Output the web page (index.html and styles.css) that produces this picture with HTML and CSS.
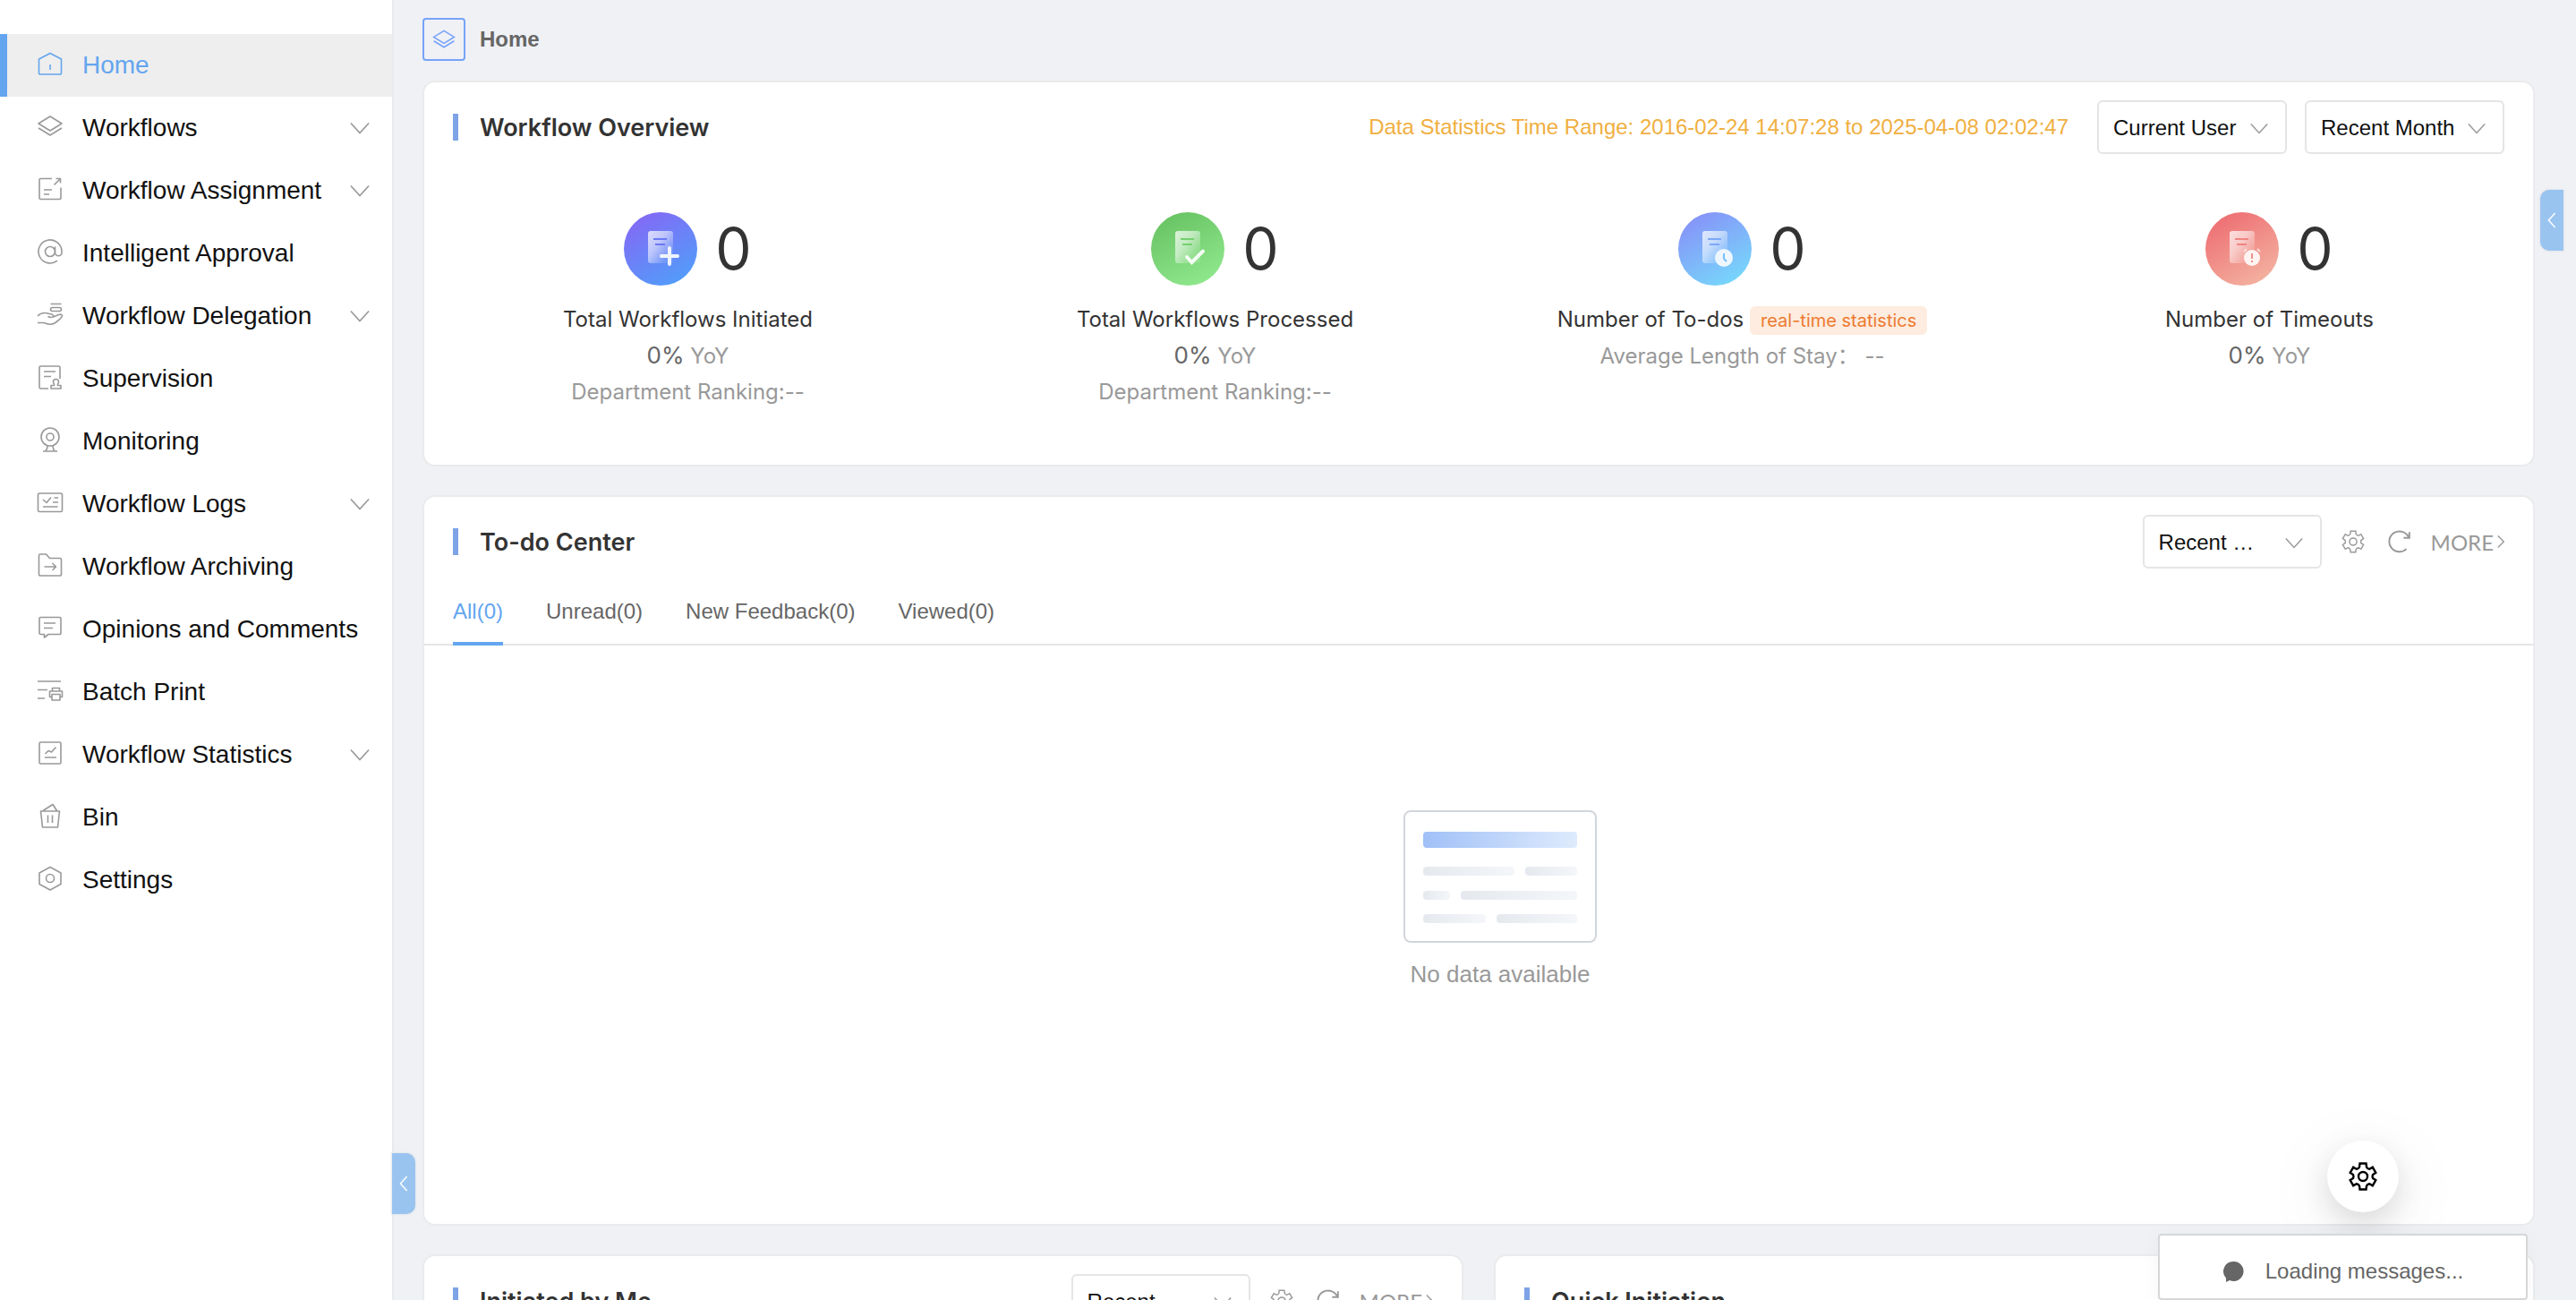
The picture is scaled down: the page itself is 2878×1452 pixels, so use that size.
FILE: index.html
```html
<!DOCTYPE html>
<html lang="en">
<head>
    <meta charset="UTF-8">
    <meta name="viewport" content="width=device-width, initial-scale=1.0">
    <title>Home</title>
    <link rel="stylesheet" href="styles.css">
</head>
<body>
    <!-- shared icons -->
    <svg class="sprite" aria-hidden="true">
        <symbol id="down" viewBox="0 0 24 14"><path d="M1 1l11 12L23 1"/></symbol>
        <symbol id="left" viewBox="0 0 12 20"><path d="M10 1L2 10l8 9"/></symbol>
        <symbol id="right" viewBox="0 0 10 18"><path d="M1 1l8 8-8 8"/></symbol>
        <symbol id="layers" viewBox="0 0 32 32"><path d="M16 5l13 8-13 8-13-8zM3 18l13 8 13-8"/></symbol>
        <symbol id="gear" viewBox="-16 -16 32 32">
            <path d="M-3.5-14.5h7L4-10.5Q5-8.5 7.2-8.2L10.8-10.3 14.3-4.2 11-2Q10 0 11 2L14.3 4.2 10.8 10.3 7.2 8.2Q5 8.5 4 10.5L3.5 14.5h-7L-4 10.5Q-5 8.5-7.2 8.2L-10.8 10.3-14.3 4.2-11 2Q-10 0-11-2L-14.3-4.2-10.8-10.3-7.2-8.2Q-5-8.5-4-10.5z"/>
            <circle r="5"/>
        </symbol>
        <symbol id="refresh" viewBox="0 0 24 24"><path d="M22 2v6h-6M21.500 8A10.500 10.500 0 1 0 19 19.500"/></symbol>
        <linearGradient id="paper" x1="0" y1="0" x2="1" y2="1">
            <stop offset="0" stop-color="#fff" stop-opacity=".75"/>
            <stop offset=".4" stop-color="#fff" stop-opacity=".55"/>
            <stop offset=".8" stop-color="#fff" stop-opacity=".1"/>
        </linearGradient>
        <linearGradient id="blue" x1=".2" y1="0" x2=".8" y2="1"><stop offset="0" stop-color="#8468f5"/><stop offset="1" stop-color="#509ffa"/></linearGradient>
        <linearGradient id="green" x1=".2" y1="0" x2=".7" y2="1"><stop offset="0" stop-color="#67c262"/><stop offset="1" stop-color="#90e88d"/></linearGradient>
        <linearGradient id="cyan" x1=".2" y1="0" x2=".8" y2="1"><stop offset="0" stop-color="#8790f8"/><stop offset="1" stop-color="#76dafb"/></linearGradient>
        <linearGradient id="red" x1=".2" y1="0" x2=".8" y2="1"><stop offset="0" stop-color="#ee6c71"/><stop offset="1" stop-color="#f3b4a2"/></linearGradient>
        <linearGradient id="bar-blue"><stop offset="0" stop-color="#a0c0f7"/><stop offset="1" stop-color="#deebfd"/></linearGradient>
        <linearGradient id="bar-gray"><stop offset="0" stop-color="#e5e9ee"/><stop offset="1" stop-color="#f4f6fa"/></linearGradient>
    </svg>

    <div class="app">
        <nav class="sidebar">
            <a href="#" class="item active">
                <svg class="icon" viewBox="0 0 32 32"><path d="M16 4.500l12.500 6.500v15.500a1.500 1.500 0 0 1-1.500 1.500H5a1.500 1.500 0 0 1-1.500-1.500V11zM16 17v6"/></svg>
                <span>Home</span>
            </a>
            <a href="#" class="item">
                <svg class="icon"><use href="#layers"/></svg>
                <span>Workflows</span>
                <svg class="arrow"><use href="#down"/></svg>
            </a>
            <a href="#" class="item">
                <svg class="icon" viewBox="0 0 32 32"><path d="M18 4.500H5.500A1.500 1.500 0 0 0 4 6v20a1.500 1.500 0 0 0 1.500 1.500h21A1.500 1.500 0 0 0 28 26V14.500M20.500 11.500l7-7M22.500 4.500h5v5M9 17h9M9 22h6"/></svg>
                <span>Workflow Assignment</span>
                <svg class="arrow"><use href="#down"/></svg>
            </a>
            <a href="#" class="item">
                <svg class="icon" viewBox="0 0 32 32"><circle cx="16" cy="16" r="5.500"/><path d="M21.500 10.500V17a3.700 3.700 0 0 0 7.500 0v-1a13 13 0 1 0-5 10.200"/></svg>
                <span>Intelligent Approval</span>
            </a>
            <a href="#" class="item">
                <svg class="icon" viewBox="0 0 32 32"><path d="M16.500 4.500h12M2 18c4-4 9-4 13-2.500 3 0 5 1.500 4.500 3s-4 1-6 0M19.500 19l6-2.500c3-1 5 .5 3.500 2-1 3-5 5-8 7.500-5 3-9 .5-12-.5H2"/><rect x="16.500" y="8.500" width="12" height="4" rx="2"/></svg>
                <span>Workflow Delegation</span>
                <svg class="arrow"><use href="#down"/></svg>
            </a>
            <a href="#" class="item">
                <svg class="icon" viewBox="0 0 32 32"><path d="M14 29H5.500A1.500 1.500 0 0 1 4 27.500v-22A1.500 1.500 0 0 1 5.500 4h20A1.500 1.500 0 0 1 27 5.500V18M9 10h13M9 15.500h8M17 29v-3.500h3.500c.5-2-1-2-1-4a3 3 0 0 1 6 0c0 2-1.500 2-1 4H28V29z"/></svg>
                <span>Supervision</span>
            </a>
            <a href="#" class="item">
                <svg class="icon" viewBox="0 0 32 32"><circle cx="16" cy="13" r="10"/><circle cx="16" cy="13" r="4"/><path d="M8 29h16M13 23c0 3-1 4-2 6M19 23c0 3 1 4 2 6"/></svg>
                <span>Monitoring</span>
            </a>
            <a href="#" class="item">
                <svg class="icon" viewBox="0 0 32 32"><rect x="2.500" y="6" width="27" height="20.500" rx="1.500"/><path d="M8 13l4 3.500 5-6M20.500 11H25M19 16h6M8 21h16.500"/></svg>
                <span>Workflow Logs</span>
                <svg class="arrow"><use href="#down"/></svg>
            </a>
            <a href="#" class="item">
                <svg class="icon" viewBox="0 0 32 32"><path d="M3.500 5.500A1.500 1.500 0 0 1 5 4h6.500l4 4.500H27a1.500 1.500 0 0 1 1.500 1.500v16.500A1.500 1.500 0 0 1 27 28H5a1.500 1.500 0 0 1-1.500-1.500zM9.500 18H22M18.500 14l4 4-4 4"/></svg>
                <span>Workflow Archiving</span>
            </a>
            <a href="#" class="item">
                <svg class="icon" viewBox="0 0 32 32"><path d="M5.500 4.500h21A1.500 1.500 0 0 1 28 6v16a1.500 1.500 0 0 1-1.500 1.500H14L9.500 27v-3.500h-4A1.500 1.500 0 0 1 4 22V6a1.500 1.500 0 0 1 1.500-1.500zM9 11h13M9 16.500h10"/></svg>
                <span>Opinions and Comments</span>
            </a>
            <a href="#" class="item">
                <svg class="icon" viewBox="0 0 32 32"><path d="M2 6h26M2 15.500h11M2 25h8M18.500 17v-3.500h8V17M18 23.500h-2.500V17h14v6.500H27"/><path d="M18 20.500h9v6.500h-9z"/></svg>
                <span>Batch Print</span>
            </a>
            <a href="#" class="item">
                <svg class="icon" viewBox="0 0 32 32"><rect x="4" y="4" width="24" height="24" rx="1.500"/><path d="M10 21h13M10.500 17l3.500-3.500 3.500 1.500 5-5.500"/></svg>
                <span>Workflow Statistics</span>
                <svg class="arrow"><use href="#down"/></svg>
            </a>
            <a href="#" class="item">
                <svg class="icon" viewBox="0 0 32 32"><path d="M5.500 11h21l-2 18h-17zM8 10.500l11-7 4.500 7M13.500 15.500V24M18.500 15.500V24"/></svg>
                <span>Bin</span>
            </a>
            <a href="#" class="item">
                <svg class="icon" viewBox="0 0 32 32"><path d="M16 3.500L28 10v12.500L16 29 4 22.500V10z"/><circle cx="16" cy="16" r="4.500"/></svg>
                <span>Settings</span>
            </a>
            <button class="side-tab tab-left" aria-label="Collapse menu"><svg><use href="#left"/></svg></button>
        </nav>

        <main class="main">
            <header class="crumb">
                <span class="crumb-icon"><svg><use href="#layers"/></svg></span>
                <h1>Home</h1>
            </header>

            <section class="card">
                <div class="card-head">
                    <h2>Workflow Overview</h2>
                    <span class="range">Data Statistics Time Range: 2016-02-24 14:07:28 to 2025-04-08 02:02:47</span>
                    <div class="select user">
                        <select aria-label="User"><option>Current User</option></select>
                        <svg><use href="#down"/></svg>
                    </div>
                    <div class="select month">
                        <select aria-label="Period"><option>Recent Month</option></select>
                        <svg><use href="#down"/></svg>
                    </div>
                </div>
                <div class="stats">
                    <div class="stat">
                        <div class="stat-top">
                            <svg viewBox="0 0 82 82"><circle cx="41" cy="41" r="41" fill="url(#blue)"/><rect x="27" y="21" width="28" height="36" rx="3" fill="url(#paper)"/><path d="M33 30h15M35 36h11" stroke="#6b78f5" stroke-width="2"/><path d="M51 40v18M42 49h18" stroke="#fff" stroke-width="4" stroke-linecap="round" opacity=".9"/></svg>
                            <b>0</b>
                        </div>
                        <p class="name">Total Workflows Initiated</p>
                        <p><span class="pct">0%</span> YoY</p>
                        <p>Department Ranking:--</p>
                    </div>
                    <div class="stat">
                        <div class="stat-top">
                            <svg viewBox="0 0 82 82"><circle cx="41" cy="41" r="41" fill="url(#green)"/><rect x="27" y="21" width="28" height="36" rx="3" fill="url(#paper)"/><path d="M33 30h15M35 36h11" stroke="#75d070" stroke-width="2"/><path d="M40 50l5.500 6L58 43.500" fill="none" stroke="#fff" stroke-width="4" stroke-linecap="round" opacity=".9"/></svg>
                            <b>0</b>
                        </div>
                        <p class="name">Total Workflows Processed</p>
                        <p><span class="pct">0%</span> YoY</p>
                        <p>Department Ranking:--</p>
                    </div>
                    <div class="stat">
                        <div class="stat-top">
                            <svg viewBox="0 0 82 82"><circle cx="41" cy="41" r="41" fill="url(#cyan)"/><rect x="27" y="21" width="28" height="36" rx="3" fill="url(#paper)"/><path d="M33 30h15M35 36h11" stroke="#7ca8f7" stroke-width="2"/><circle cx="51" cy="51" r="10" fill="#eef7ff"/><path d="M51 46v6l3 3" fill="none" stroke="#78c0fa" stroke-width="2"/></svg>
                            <b>0</b>
                        </div>
                        <p class="name">Number of To-dos <span class="tag">real-time statistics</span></p>
                        <p>Average Length of Stay： --</p>
                    </div>
                    <div class="stat">
                        <div class="stat-top">
                            <svg viewBox="0 0 82 82"><circle cx="41" cy="41" r="41" fill="url(#red)"/><rect x="27" y="21" width="28" height="36" rx="3" fill="url(#paper)"/><path d="M33 30h15M35 36h11" stroke="#ef8581" stroke-width="2"/><circle cx="52" cy="51" r="9" fill="#fff4f2"/><path d="M43 44l3-3M58 41l3 3" stroke="#fbdcd8" stroke-width="2"/><path d="M52 46v6M52 54v2" stroke="#ef9089" stroke-width="2"/></svg>
                            <b>0</b>
                        </div>
                        <p class="name">Number of Timeouts</p>
                        <p><span class="pct">0%</span> YoY</p>
                    </div>
                </div>
            </section>

            <section class="card">
                <div class="card-head">
                    <h2>To-do Center</h2>
                    <div class="select recent">
                        <select aria-label="Period"><option>Recent …</option></select>
                        <svg><use href="#down"/></svg>
                    </div>
                    <button class="tool" aria-label="Settings"><svg><use href="#gear"/></svg></button>
                    <button class="tool" aria-label="Refresh"><svg><use href="#refresh"/></svg></button>
                    <a href="#" class="more">MORE <svg><use href="#right"/></svg></a>
                </div>
                <div class="tabs">
                    <button class="on">All(0)</button>
                    <button>Unread(0)</button>
                    <button>New Feedback(0)</button>
                    <button>Viewed(0)</button>
                </div>
                <div class="empty">
                    <svg viewBox="0 0 216 148">
                        <rect x="1" y="1" width="214" height="146" rx="7" fill="#fff" stroke="#d2d6da" stroke-width="2"/>
                        <rect x="22" y="24" width="172" height="18" rx="4" fill="url(#bar-blue)"/>
                        <g fill="url(#bar-gray)">
                            <rect x="22" y="63" width="102" height="10" rx="4"/>
                            <rect x="136" y="63" width="58" height="10" rx="4"/>
                            <rect x="22" y="90" width="30" height="10" rx="4"/>
                            <rect x="64" y="90" width="130" height="10" rx="4"/>
                            <rect x="22" y="116" width="70" height="10" rx="4"/>
                            <rect x="104" y="116" width="90" height="10" rx="4"/>
                        </g>
                    </svg>
                    <p>No data available</p>
                </div>
            </section>

            <div class="row">
                <section class="card">
                    <div class="card-head">
                        <h2>Initiated by Me</h2>
                        <div class="select recent">
                            <select aria-label="Period"><option>Recent …</option></select>
                            <svg><use href="#down"/></svg>
                        </div>
                        <button class="tool" aria-label="Settings"><svg><use href="#gear"/></svg></button>
                        <button class="tool" aria-label="Refresh"><svg><use href="#refresh"/></svg></button>
                        <a href="#" class="more">MORE <svg><use href="#right"/></svg></a>
                    </div>
                </section>
                <section class="card">
                    <div class="card-head">
                        <h2>Quick Initiation</h2>
                    </div>
                </section>
            </div>
        </main>

        <button class="side-tab tab-right" aria-label="Open panel"><svg><use href="#left"/></svg></button>
        <button class="fab" aria-label="Page settings"><svg><use href="#gear"/></svg></button>
        <div class="message">
            <svg viewBox="0 0 24 24"><path d="M12 1a11 11 0 1 1-4 21L4 24V19.500A11 11 0 0 1 12 1z"/></svg>
            <span>Loading messages...</span>
        </div>
    </div>
</body>
</html>
```
FILE: styles.css
```css
* {
    box-sizing: border-box;
}
body {
    margin: 0;
    font-family: "Liberation Sans", Arial, sans-serif;
    font-size: 24px;
    color: #666;
    background-color: #eff1f5;
}
h1, h2, p {
    margin: 0;
}
a {
    text-decoration: none;
    color: inherit;
}
button, select {
    font: inherit;
    color: inherit;
    background: none;
    border: 0;
    padding: 0;
    margin: 0;
}
svg {
    flex: none;
    display: block;
}
.sprite {
    position: absolute;
    width: 0;
    height: 0;
}
.app {
    position: relative;
    display: flex;
    height: 100vh;
    overflow: hidden;
}

/* left menu */
.sidebar {
    position: relative;
    flex: none;
    width: 440px;
    padding-top: 38px;
    background-color: #fff;
    border-right: 2px solid #e9eaec;
}
.item {
    display: flex;
    align-items: center;
    height: 70px;
    padding: 0 25px 0 32px;
    border-left: 8px solid transparent;
    font-size: 28px;
    color: #111;
}
.item.active {
    background-color: #eee;
    border-left-color: #64a5ef;
    color: #64a5ef;
}
.item span {
    flex: 1;
    white-space: nowrap;
}
.icon {
    width: 32px;
    height: 32px;
    margin: 0 20px 4px 0;
    fill: none;
    stroke: #999;
    stroke-width: 1.6;
    stroke-linejoin: round;
}
.active .icon {
    stroke: #64a5ef;
}
.arrow {
    width: 22px;
    height: 14px;
    fill: none;
    stroke: #999;
    stroke-width: 1.8;
}
.side-tab {
    position: absolute;
    display: flex;
    align-items: center;
    justify-content: center;
    width: 26px;
    height: 68px;
    background-color: #9ac4f0;
    box-shadow: 0 0 2px 1px #e4e7ec;
}
.side-tab svg {
    width: 12px;
    height: 18px;
    fill: none;
    stroke: #fff;
    stroke-width: 1.6;
}
.tab-left {
    left: 438px;
    bottom: 96px;
    border-radius: 0 10px 10px 0;
}
.tab-right {
    right: 14px;
    top: 212px;
    border-radius: 10px 0 0 10px;
}

/* content */
.main {
    flex: 1;
    min-width: 0;
    padding: 20px 46px 0 32px;
}
.crumb {
    display: flex;
    align-items: center;
    gap: 16px;
    margin-bottom: 22px;
}
.crumb-icon {
    display: flex;
    align-items: center;
    justify-content: center;
    width: 48px;
    height: 48px;
    border: 2px solid #77a3f8;
    border-radius: 4px;
}
.crumb-icon svg {
    width: 28px;
    height: 28px;
    fill: none;
    stroke: #77a3f8;
    stroke-width: 1.8;
}
.crumb h1 {
    font-size: 24px;
}
.card {
    margin-bottom: 32px;
    background-color: #fff;
    border: 2px solid #eaebec;
    border-radius: 14px;
}
.card-head {
    display: flex;
    align-items: center;
    height: 80px;
    padding: 20px 32px 0;
}
.card-head h2 {
    display: flex;
    align-items: center;
    flex: 1;
    font-family: Inter, sans-serif;
    font-size: 27px;
    font-weight: 600;
    color: #333;
}
.card-head h2::before {
    content: "";
    width: 6px;
    height: 30px;
    margin-right: 24px;
    background-color: #7ea3e6;
}
.range {
    margin-right: 32px;
    color: #f0af41;
}
.select {
    position: relative;
    height: 60px;
}
.select select {
    appearance: none;
    width: 100%;
    height: 60px;
    padding: 0 16px;
    border: 2px solid #e5e5e5;
    border-radius: 6px;
    background-color: #fff;
    color: #111;
}
.select svg {
    position: absolute;
    right: 21px;
    top: 25px;
    width: 20px;
    height: 13px;
    fill: none;
    stroke: #999;
    stroke-width: 1.8;
    pointer-events: none;
}
.select.user {
    width: 212px;
    margin-right: 20px;
}
.select.month {
    width: 223px;
}
.select.recent {
    width: 200px;
}
.tool {
    display: flex;
    margin-left: 26px;
}
.select + .tool {
    margin-left: 22px;
}
.tool svg {
    width: 26px;
    height: 26px;
    fill: none;
    stroke: #999;
    stroke-width: 1.8;
}
.more {
    display: flex;
    align-items: center;
    gap: 4px;
    margin-left: 22px;
    font-family: Lato, sans-serif;
    color: #999;
}
.more svg {
    width: 8px;
    height: 18px;
    fill: none;
    stroke: #999;
    stroke-width: 1.8;
}

/* overview */
.stats {
    display: grid;
    grid-template-columns: repeat(4, 1fr);
    padding: 65px 0 61px;
    font-family: Inter, "Noto Sans CJK SC", sans-serif;
    line-height: 40px;
    text-align: center;
    color: #999;
}
.stat {
    min-height: 220px;
}
.stat-top {
    display: flex;
    align-items: center;
    justify-content: center;
    gap: 20px;
    margin-bottom: 18px;
}
.stat-top svg {
    width: 82px;
    height: 82px;
}
.stat-top b {
    font-size: 64px;
    font-weight: 400;
    color: #333;
}
.stat .name {
    color: #333;
}
.pct {
    font-size: 26px;
    color: #666;
}
.tag {
    padding: 4px 12px;
    border-radius: 6px;
    background-color: #fdecdf;
    font-size: 20px;
    color: #ee7a30;
}

/* to-do */
.tabs {
    display: flex;
    gap: 48px;
    padding: 34px 32px 0;
    border-bottom: 2px solid #e5e5e5;
}
.tabs button {
    margin-bottom: -2px;
    padding-bottom: 20px;
    border-bottom: 4px solid transparent;
    line-height: 28px;
}
.tabs .on {
    color: #64a5ef;
    border-bottom-color: #64a5ef;
}
.empty {
    display: flex;
    flex-direction: column;
    align-items: center;
    gap: 20px;
    min-height: 646px;
    padding: 184px 0 0 48px;
    font-size: 26px;
    color: #999;
}
.empty svg {
    width: 216px;
    height: 148px;
}
.row {
    display: grid;
    grid-template-columns: 1fr 1fr;
    gap: 34px;
}
.row .card {
    min-height: 400px;
}

/* floating */
.fab {
    position: absolute;
    right: 198px;
    bottom: 98px;
    display: flex;
    align-items: center;
    justify-content: center;
    width: 80px;
    height: 80px;
    border-radius: 50%;
    background-color: #fff;
    box-shadow: 0 12px 32px rgba(0, 0, 0, .12), 0 18px 80px 10px rgba(0, 0, 0, .05);
}
.fab svg {
    width: 32px;
    height: 32px;
    fill: none;
    stroke: #000;
    stroke-width: 2.4;
}
.message {
    position: absolute;
    right: 54px;
    bottom: 0;
    display: flex;
    align-items: center;
    justify-content: center;
    gap: 24px;
    width: 413px;
    height: 74px;
    padding-top: 10px;
    border: 2px solid #d5d7d8;
    border-radius: 4px;
    background-color: #fff;
    box-shadow: 0 4px 24px rgba(0, 0, 0, .04);
}
.message svg {
    width: 24px;
    height: 24px;
    fill: #666;
}
```
